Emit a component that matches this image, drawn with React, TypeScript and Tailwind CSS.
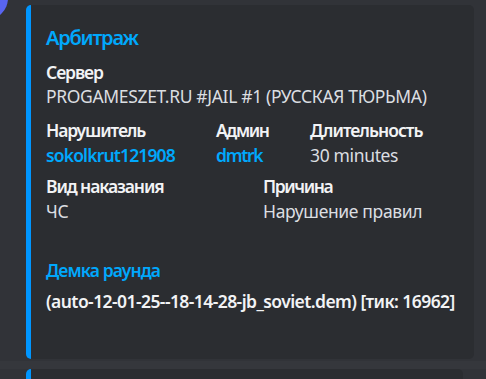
import React from "react";

const nameCls = "h-[22.5px] leading-[22.5px] text-[17.5px] font-semibold text-[#f2f3f5] tracking-[-1.1px]";
const valCls = "h-[22.5px] leading-[22.5px] text-[17.5px] tracking-[-0.35px] text-[#dbdee1]";

export default function App() {
  return (
    <div className="relative w-[486px] h-[379px] overflow-hidden bg-[#313338] font-['Noto_Sans',sans-serif]">
      <div className="absolute left-[-36px] top-[-24px] w-[44px] h-[44px] rounded-full bg-[#5865f2]" />
      <div className="pl-[26px] pt-[5px]">
        <div className="w-[448px] h-[354px] rounded-[5px] bg-[#2b2d31] border-l-[5px] border-[#0096ff] pl-[15px] pt-[18.5px]">
          <div className="h-[27.5px] leading-[27.5px] text-[20px] font-semibold tracking-[-1.2px] text-[#00a8fc]">Арбитраж</div>

          <div className={"mt-[10px] " + nameCls}>Сервер</div>
          <div className={"mt-[1.5px] " + valCls}>PROGAMESZET.RU #JAIL #1 (РУССКАЯ ТЮРЬМА)</div>

          <div className="mt-[11.2px] flex">
            <div className="w-[170px]">
              <div className={nameCls}>Нарушитель</div>
              <div className="mt-[2.5px] h-[22.5px] leading-[22.5px] text-[17.5px] font-semibold tracking-[-0.85px] text-[#00a8fc]">sokolkrut121908</div>
            </div>
            <div className="w-[94px]">
              <div className="h-[22.5px] leading-[22.5px] text-[17.5px] font-semibold text-[#f2f3f5] tracking-[-1.4px]">Админ</div>
              <div className="mt-[2.5px] h-[22.5px] leading-[22.5px] text-[17.5px] font-semibold tracking-[-1.3px] text-[#00a8fc]">dmtrk</div>
            </div>
            <div>
              <div className="h-[22.5px] leading-[22.5px] text-[17.5px] font-semibold text-[#f2f3f5] tracking-[-1px]">Длительность</div>
              <div className={"mt-[2.5px] " + valCls}>30 minutes</div>
            </div>
          </div>

          <div className="mt-[8.5px] flex">
            <div className="w-[217px]">
              <div className={nameCls}>Вид наказания</div>
              <div className={"mt-[3px] " + valCls}>ЧС</div>
            </div>
            <div>
              <div className="h-[22.5px] leading-[22.5px] text-[17.5px] font-semibold text-[#f2f3f5] tracking-[-1.4px]">Причина</div>
              <div className={"mt-[3px] " + valCls}>Нарушение правил</div>
            </div>
          </div>

          <div className="mt-[36px] h-[22.5px] leading-[22.5px] text-[17.5px] font-semibold tracking-[-0.9px] text-[#00a8fc]">Демка раунда</div>
          <div className="mt-[9px] h-[22.5px] leading-[22.5px] text-[17.5px] font-semibold tracking-[-0.57px] text-[#f2f3f5] whitespace-nowrap">(auto-12-01-25--18-14-28-jb_soviet.dem) [тик: 16962]</div>
        </div>
      </div>
      <div className="mt-[2px] h-[8px] bg-[#35373c]" />
      <div className="pl-[26px]">
        <div className="w-[437px] h-[30px] rounded-[5px] bg-[#2b2d31] border-l-[5px] border-[#0096ff]" />
      </div>
    </div>
  );
}
